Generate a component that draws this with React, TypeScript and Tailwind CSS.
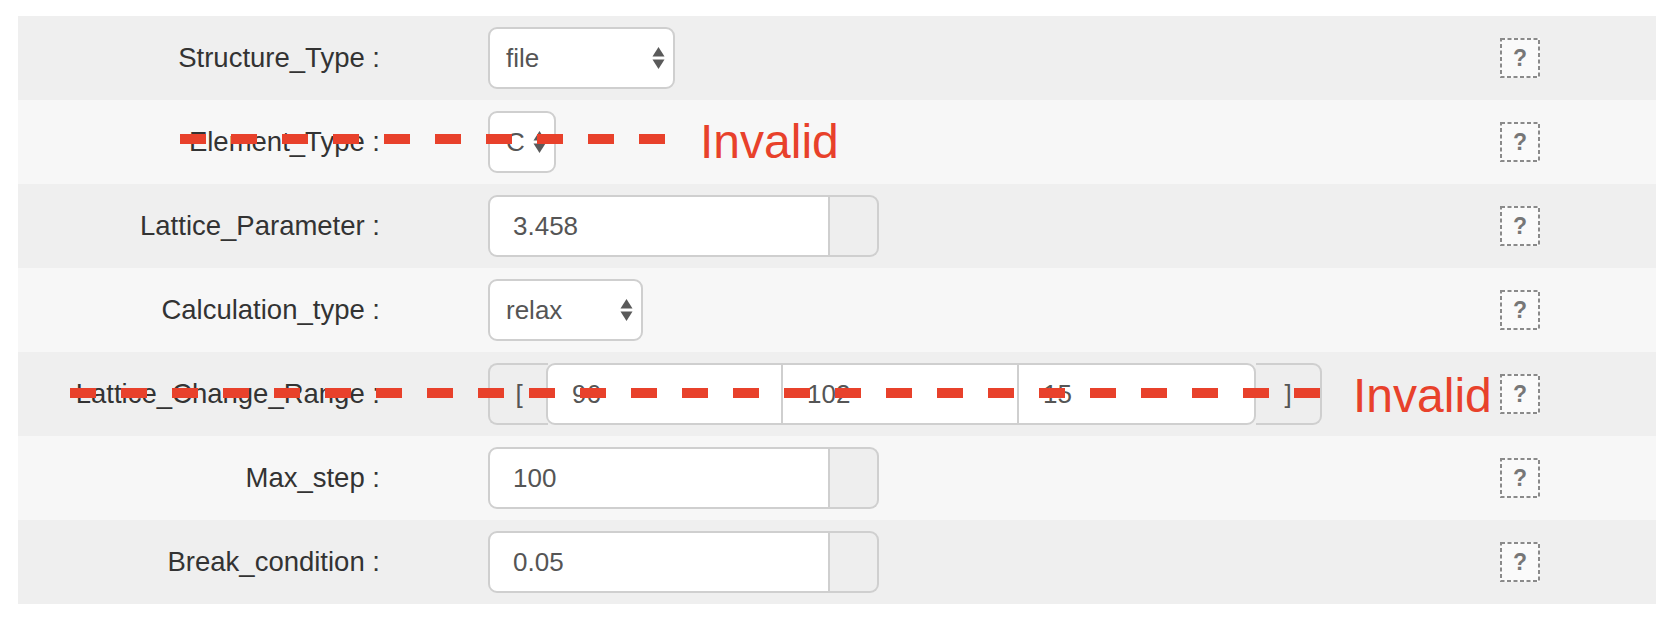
import React from "react";

const FONT = { fontFamily: '"Liberation Sans", Arial, Helvetica, sans-serif' };

function Arrows() {
  return (
    <svg width="13" height="24" viewBox="0 0 13 24" className="shrink-0">
      <polygon points="6.5,1 12.5,10.5 0.5,10.5" fill="#5a5a5a" />
      <polygon points="0.5,13.5 12.5,13.5 6.5,23" fill="#5a5a5a" />
    </svg>
  );
}

function Select({ value, widthClass }: { value: string; widthClass: string }) {
  return (
    <div
      className={`${widthClass} h-[62px] bg-white border-2 border-[#cfcfcf] rounded-[9px] flex items-center justify-between pl-[16px] pr-[8px] text-[26px] text-[#555]`}
    >
      <span>{value}</span>
      <Arrows />
    </div>
  );
}

function InputGroup({ value }: { value: string }) {
  return (
    <div className="flex h-[62px] w-[391px]">
      <div className="w-[342px] bg-white border-2 border-[#cfcfcf] rounded-l-[9px] flex items-center pl-[23px] text-[26px] text-[#555]">
        {value}
      </div>
      <div className="flex-1 bg-[#eeeeee] border-2 border-l-0 border-[#cfcfcf] rounded-r-[9px]" />
    </div>
  );
}

function RangeGroup({ values }: { values: string[] }) {
  return (
    <div className="flex h-[62px]">
      <div className="w-[60px] bg-[#eeeeee] border-2 border-r-0 border-[#cfcfcf] rounded-l-[9px] flex items-center justify-center text-[26px] text-[#555]">
        [
      </div>
      <div className="w-[237px] -ml-[2px] bg-white border-2 border-[#cfcfcf] rounded-l-[9px] flex items-center pl-[24px] text-[26px] text-[#555]">
        {values[0]}
      </div>
      <div className="w-[238px] -ml-[2px] bg-white border-2 border-[#cfcfcf] flex items-center pl-[24px] text-[26px] text-[#555]">
        {values[1]}
      </div>
      <div className="w-[239px] -ml-[2px] bg-white border-2 border-[#cfcfcf] rounded-r-[9px] flex items-center pl-[24px] text-[26px] text-[#555]">
        {values[2]}
      </div>
      <div className="w-[66px] bg-[#eeeeee] border-2 border-l-0 border-[#cfcfcf] rounded-r-[9px] flex items-center justify-center text-[26px] text-[#555]">
        ]
      </div>
    </div>
  );
}

function Help() {
  return (
    <div className="relative w-[40px] h-[40px] bg-[#fafafa] flex items-center justify-center">
      <svg width="40" height="40" className="absolute inset-0">
        <rect x="1" y="1" width="38" height="38" fill="none" stroke="#8a8a8a" strokeWidth="2" strokeDasharray="4 2.5" />
      </svg>
      <span className="relative text-[23px] font-bold text-[#777] leading-none">?</span>
    </div>
  );
}

function Annotation({ left, width, top, textLeft }: { left: number; width: number; top: number; textLeft: number }) {
  return (
    <>
      <svg
        className="absolute pointer-events-none"
        style={{ left, top: top - 5, width, height: 10 }}
        width={width}
        height={10}
      >
        <line x1="0" y1="5" x2={width} y2="5" stroke="#e8412b" strokeWidth="10" strokeDasharray="26 25" />
      </svg>
      <span
        className="absolute text-[48px] leading-none text-[#e8412b] pointer-events-none"
        style={{ left: textLeft, top: top - 21 }}
      >
        Invalid
      </span>
    </>
  );
}

type Row = {
  label: string;
  control: React.ReactNode;
  annotation?: { left: number; width: number; top: number; textLeft: number };
};

const rows: Row[] = [
  { label: "Structure_Type", control: <Select value="file" widthClass="w-[187px]" /> },
  {
    label: "Element_Type",
    control: <Select value="C" widthClass="w-[68px]" />,
    annotation: { left: 162, width: 485, top: 39, textLeft: 682 },
  },
  { label: "Lattice_Parameter", control: <InputGroup value="3.458" /> },
  { label: "Calculation_type", control: <Select value="relax" widthClass="w-[155px]" /> },
  {
    label: "Lattice_Change_Range",
    control: <RangeGroup values={["96", "102", "15"]} />,
    annotation: { left: 52, width: 1250, top: 41, textLeft: 1335 },
  },
  { label: "Max_step", control: <InputGroup value="100" /> },
  { label: "Break_condition", control: <InputGroup value="0.05" /> },
];

export default function App() {
  return (
    <div className="min-h-[618px] bg-white pt-[16px] pl-[18px]" style={FONT}>
      <div className="w-[1638px] flex flex-col">
        {rows.map((r, i) => (
          <div
            key={r.label}
            className={`relative h-[84px] flex items-center ${i % 2 === 0 ? "bg-[#efefef]" : "bg-[#f7f7f7]"}`}
          >
            <div className="w-[362px] text-right text-[27.5px] text-[#333]">{r.label} :</div>
            <div className="ml-[108px] w-[1012px] flex items-center">{r.control}</div>
            <Help />
            {r.annotation && <Annotation {...r.annotation} />}
          </div>
        ))}
      </div>
    </div>
  );
}
